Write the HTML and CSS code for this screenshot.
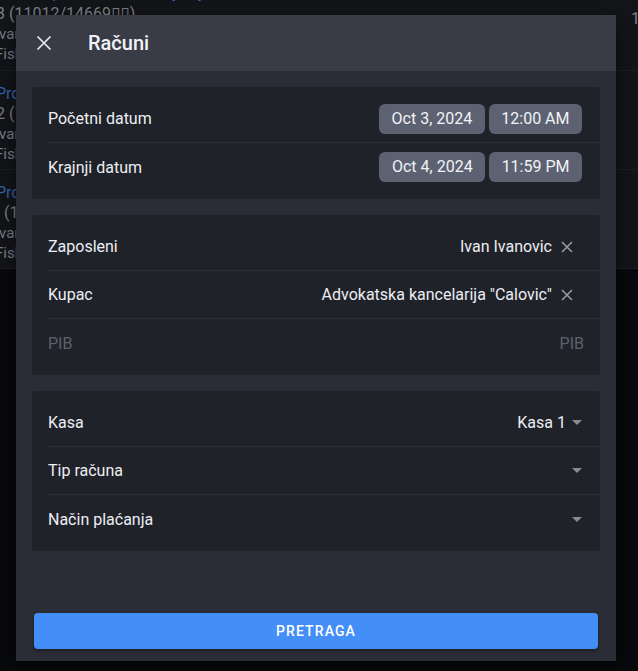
FILE: index.html
```html
<!DOCTYPE html>
<html>
<head>
<meta charset="utf-8">
<link rel="stylesheet" href="styles.css">
</head>
<body>
<div class="page">
  <div class="list">
    <div class="item first">
      <div class="line blue">Promet po danu i kasiranju xy</div>
      <div class="line">3 (11012/14669<span class="tofu">▯▯</span>)</div>
      <div class="line small">Ivan Ivanovic</div>
      <div class="line small">Fiskalizovan</div>
      <span class="side">1</span>
    </div>
    <div class="item">
      <div class="line blue">Promet</div>
      <div class="line">2 (11011/14668)</div>
      <div class="line small">Ivan Ivanovic</div>
      <div class="line small">Fiskalizovan</div>
    </div>
    <div class="item">
      <div class="line blue">Promet</div>
      <div class="line">&nbsp;&nbsp;(11010/14667)</div>
      <div class="line small">Ivan Ivanovic</div>
      <div class="line small">Fiskalizovan</div>
    </div>
  </div>
</div>

<div class="dialog">
  <div class="header">
    <span class="close">
      <svg width="24" height="24" viewBox="0 0 24 24"><path d="M5.5 5.5 18.5 18.5M18.5 5.5 5.5 18.5" stroke="#e8e9ee" stroke-width="1.7"/></svg>
    </span>
    <span class="title">Računi</span>
  </div>
  <div class="body">
    <div class="card">
      <div class="row">
        <span class="label">Početni datum</span>
        <span class="chips"><span class="chip">Oct 3, 2024</span><span class="chip">12:00 AM</span></span>
      </div>
      <div class="row">
        <span class="label">Krajnji datum</span>
        <span class="chips"><span class="chip">Oct 4, 2024</span><span class="chip">11:59 PM</span></span>
      </div>
    </div>
    <div class="card">
      <div class="row">
        <span class="label">Zaposleni</span>
        <span class="value">Ivan Ivanovic<svg class="clear" width="12" height="12" viewBox="0 0 12 12"><path d="M1 1 11 11M11 1 1 11" stroke="#9a9ca4" stroke-width="1.5"/></svg></span>
      </div>
      <div class="row">
        <span class="label">Kupac</span>
        <span class="value">Advokatska kancelarija "Calovic"<svg class="clear" width="12" height="12" viewBox="0 0 12 12"><path d="M1 1 11 11M11 1 1 11" stroke="#9a9ca4" stroke-width="1.5"/></svg></span>
      </div>
      <div class="row">
        <span class="label muted">PIB</span>
        <span class="value muted">PIB</span>
      </div>
    </div>
    <div class="card">
      <div class="row">
        <span class="label">Kasa</span>
        <span class="value">Kasa 1<span class="arrow"></span></span>
      </div>
      <div class="row">
        <span class="label">Tip računa</span>
        <span class="value"><span class="arrow"></span></span>
      </div>
      <div class="row">
        <span class="label">Način plaćanja</span>
        <span class="value"><span class="arrow"></span></span>
      </div>
    </div>
  </div>
  <div class="footer">
    <button class="btn">Pretraga</button>
  </div>
</div>
</body>
</html>
```
FILE: styles.css
```css
html, body {
  margin: 0;
  padding: 0;
  background: #08090c;
  font-family: Roboto, "Noto Sans", sans-serif;
  overflow: hidden;
}
.page {
  width: 638px;
  height: 671px;
  background: #08090c;
}
.list {
  margin-top: -28px;
}
.item {
  position: relative;
  height: 99px;
  padding-top: 13px;
  box-sizing: border-box;
  background: #141519;
  border-bottom: 1px solid #1d1e23;
  margin-left: -4px;
}
.item.first {
  padding-top: 11px;
}
.line {
  font-size: 16px;
  line-height: 20px;
  color: #7f828a;
  white-space: nowrap;
}
.line.small {
  font-size: 15px;
  margin-left: -1px;
}
.line.blue {
  color: #3766b0;
}
.tofu {
  font-family: "DejaVu Sans", sans-serif;
  font-size: 17px;
}
.side {
  position: absolute;
  right: -2px;
  top: 37px;
  font-size: 16px;
  line-height: 20px;
  color: #7f828a;
}

.dialog {
  position: absolute;
  left: 16px;
  top: 15px;
  width: 600px;
  height: 646px;
  background: #2b2d36;
  display: flex;
  flex-direction: column;
  box-shadow: 0 8px 24px rgba(0, 0, 0, 0.5);
}
.header {
  height: 56px;
  background: #393c47;
  display: flex;
  align-items: center;
  padding-left: 16px;
  flex-shrink: 0;
}
.close {
  width: 24px;
  height: 24px;
  display: flex;
}
.title {
  margin-left: 32px;
  font-size: 20px;
  font-weight: 500;
  color: #f1f2f5;
}
.body {
  flex: 1;
  padding: 16px 16px 0;
  display: flex;
  flex-direction: column;
  gap: 16px;
}
.card {
  background: #20222a;
  border-radius: 2px;
  padding: 8px 0;
}
.row {
  height: 48px;
  margin-left: 16px;
  padding-right: 16px;
  display: flex;
  align-items: center;
  justify-content: space-between;
  border-bottom: 1px solid #2d3039;
  box-sizing: border-box;
}
.row:last-child {
  border-bottom: none;
}
.label {
  font-size: 16px;
  color: #eceef2;
}
.muted {
  color: #5e616a !important;
}
.chips {
  display: flex;
  gap: 4px;
  margin-right: 2px;
}
.chip {
  height: 30px;
  line-height: 30px;
  padding: 0 12.5px;
  background: #5c6272;
  border-radius: 6px;
  font-size: 16px;
  color: #f2f3f6;
}
.value {
  display: flex;
  align-items: center;
  font-size: 16px;
  color: #eceef2;
}
.clear {
  margin-left: 9px;
  margin-right: 11px;
}
.arrow {
  width: 0;
  height: 0;
  border-left: 5px solid transparent;
  border-right: 5px solid transparent;
  border-top: 5px solid #8b8c92;
  margin-left: 6px;
  margin-right: 2px;
}
.footer {
  padding: 0 18px 12px;
}
.btn {
  width: 100%;
  height: 36px;
  border: none;
  border-radius: 4px;
  background: #448ef7;
  color: #ffffff;
  font-family: Roboto, sans-serif;
  font-size: 14px;
  font-weight: 500;
  letter-spacing: 1.1px;
  text-transform: uppercase;
  box-shadow: 0 2px 3px rgba(0, 0, 0, 0.35);
}
```
